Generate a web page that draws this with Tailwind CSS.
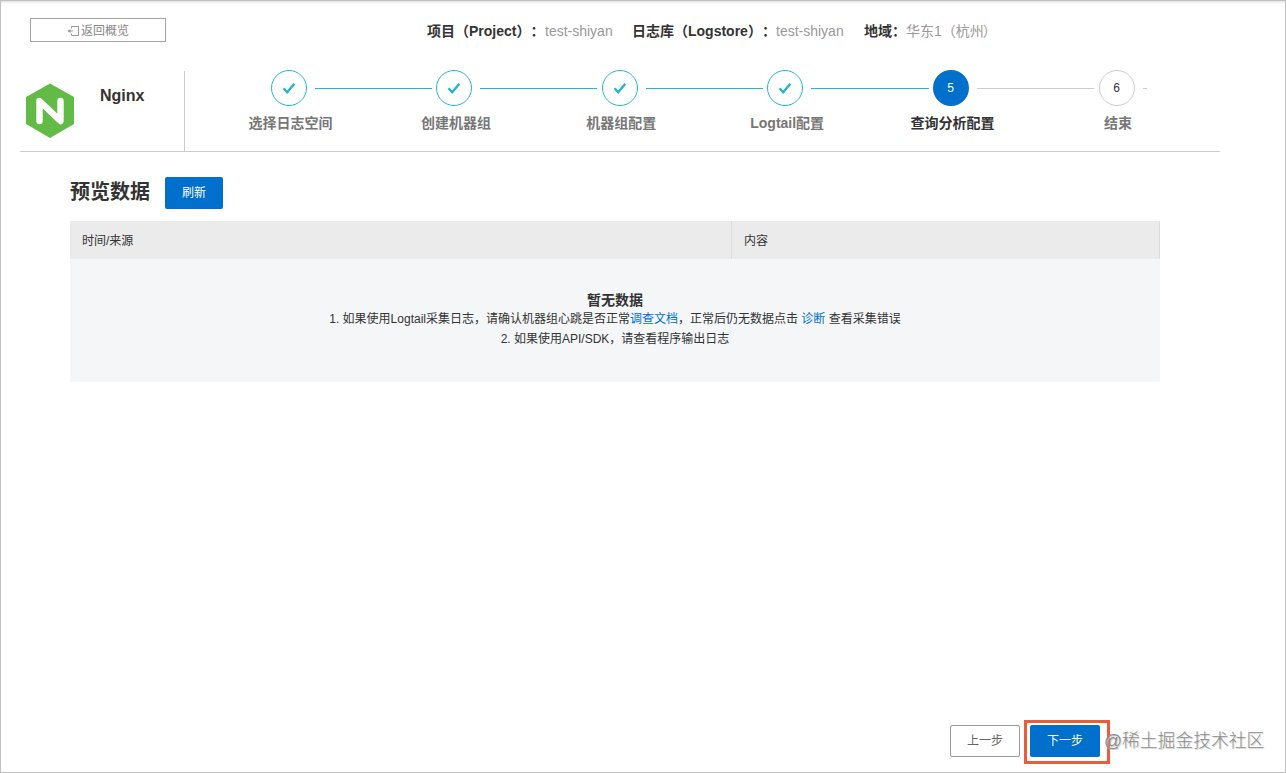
<!DOCTYPE html>
<html lang="zh-CN">
  <head>
    <meta charset="UTF-8" />
    <meta name="viewport" content="width=device-width, initial-scale=1.0" />
    <title>查询分析配置</title>
    <script src="https://cdn.jsdelivr.net/npm/@tailwindcss/browser@4"></script>
  </head>
  <body
    class="relative flex flex-col w-[1286px] h-[773px] overflow-hidden bg-white border border-[#c0c0c0] text-xs text-[#333] whitespace-nowrap font-['Liberation_Sans','Noto_Sans_CJK_SC',sans-serif] [text-spacing-trim:space-all]"
  >
    <div class="h-[3px] shrink-0 bg-linear-to-b from-[#e2e2e2] to-white"></div>

    <!-- top bar -->
    <header class="flex h-[67px] shrink-0 pt-[14px] pl-[29px]">
      <button
        class="flex items-center justify-center w-[136px] h-6 pt-px border border-[#a3a3a3] text-[#888]"
      >
        <svg class="w-[13px] h-3 mr-px" viewBox="0 0 13 12" fill="none" stroke="#999">
          <path d="M4.5 3.5v-2h7v9h-7v-2" />
          <path d="M6 6H1" />
          <path d="M3.5 4v4L.5 6z" fill="#999" stroke="none" />
        </svg>
        <span>返回概览</span>
      </button>
      <div class="flex h-[26px] items-center ml-[261px] text-sm text-[#999]">
        <b class="w-[118px] text-[#333]">项目（Project）：</b>
        <span class="w-[87px]">test-shiyan</span>
        <b class="w-[144px] text-[#333]">日志库（Logstore）：</b>
        <span class="w-[88px]">test-shiyan</span>
        <b class="w-[42px] text-[#333]">地域：</b>
        <span>华东1（杭州<span class="-ml-px">）</span></span>
      </div>
    </header>

    <!-- wizard steps -->
    <section class="flex w-[1200px] h-[81px] shrink-0 ml-[19px] border-b border-[#ccc]">
      <div class="flex w-[165px] pl-[6px] pt-[12px] border-r border-[#ccc]">
        <svg class="w-12 h-[55px]" viewBox="0 0 48 55">
          <path d="M24 0.5 48 14v27L24 55 0 41V14z" fill="#62bb46" />
          <path d="M13.5 38V18L34.5 38V18" fill="none" stroke="#fff" stroke-width="6.4" stroke-linecap="round" stroke-linejoin="round" />
        </svg>
        <h1 class="ml-[26px] mt-px text-base leading-6 font-bold">Nginx</h1>
      </div>
      <ol class="flex -mt-px pl-[86px] text-sm font-bold text-[#777]">
        <li class="w-[165.4px]">
          <div class="flex items-center gap-2">
            <i class="flex items-center justify-center size-9 shrink-0 rounded-full border border-[#25b4ce]">
              <svg class="size-3.5" viewBox="0 0 14 14" fill="none" stroke="#25b4ce" stroke-width="2.4"><path d="M1.5 7.3 5.2 11.3 12.3 2.7" /></svg>
            </i>
            <hr class="w-[117px] border-[#25b4ce]" />
          </div>
          <p class="flex justify-center w-[39px] pt-[7px] leading-5">选择日志空间</p>
        </li>
        <li class="w-[165.4px]">
          <div class="flex items-center gap-2">
            <i class="flex items-center justify-center size-9 shrink-0 rounded-full border border-[#25b4ce]">
              <svg class="size-3.5" viewBox="0 0 14 14" fill="none" stroke="#25b4ce" stroke-width="2.4"><path d="M1.5 7.3 5.2 11.3 12.3 2.7" /></svg>
            </i>
            <hr class="w-[117px] border-[#25b4ce]" />
          </div>
          <p class="flex justify-center w-[39px] pt-[7px] leading-5">创建机器组</p>
        </li>
        <li class="w-[165.4px]">
          <div class="flex items-center gap-2">
            <i class="flex items-center justify-center size-9 shrink-0 rounded-full border border-[#25b4ce]">
              <svg class="size-3.5" viewBox="0 0 14 14" fill="none" stroke="#25b4ce" stroke-width="2.4"><path d="M1.5 7.3 5.2 11.3 12.3 2.7" /></svg>
            </i>
            <hr class="w-[117px] border-[#25b4ce]" />
          </div>
          <p class="flex justify-center w-[39px] pt-[7px] leading-5">机器组配置</p>
        </li>
        <li class="w-[165.4px]">
          <div class="flex items-center gap-2">
            <i class="flex items-center justify-center size-9 shrink-0 rounded-full border border-[#25b4ce]">
              <svg class="size-3.5" viewBox="0 0 14 14" fill="none" stroke="#25b4ce" stroke-width="2.4"><path d="M1.5 7.3 5.2 11.3 12.3 2.7" /></svg>
            </i>
            <hr class="w-[118px] border-[#25b4ce]" />
          </div>
          <p class="flex justify-center w-10 pt-[7px] leading-5">Logtail配置</p>
        </li>
        <li class="w-[166px]">
          <div class="flex items-center gap-2">
            <span class="flex items-center justify-center size-9 shrink-0 rounded-full bg-[#0070cc] text-xs font-normal text-white">5</span>
            <hr class="w-[117px] border-[#ccc]" />
          </div>
          <p class="flex justify-center w-10 pt-[7px] leading-5 text-[#333]">查询分析配置</p>
        </li>
        <li>
          <div class="flex items-center gap-2">
            <span class="flex items-center justify-center size-9 shrink-0 rounded-full border border-[#ccc] text-xs font-normal text-[#333]">6</span>
            <hr class="w-1 border-[#ccc]" />
          </div>
          <p class="flex justify-center w-[39px] pt-[7px] leading-5">结束</p>
        </li>
      </ol>
    </section>

    <!-- data preview -->
    <main class="w-[1090px] ml-[69px] pt-[25px]">
      <div class="flex h-[44px]">
        <h2 class="w-[95px] pt-px text-xl leading-7 font-bold">预览数据</h2>
        <button class="w-[58px] h-8 rounded-xs bg-[#0070cc] text-white">刷新</button>
      </div>
      <div class="flex items-center h-[38px] bg-[#ebebeb] border-r border-[#dcdcdc]">
        <div class="flex items-center w-[662px] h-full pl-3 pt-0.5 border-r border-[#dcdcdc]">时间/来源</div>
        <div class="pl-3 pt-0.5">内容</div>
      </div>
      <div class="h-[123px] pt-[31px] bg-[#f5f6f8] text-center leading-5">
        <p class="h-[19px] text-sm leading-5 font-bold">暂无数据</p>
        <p>1. 如果使用Logtail采集日志，请确认机器组心跳是否正常<a class="text-[#0070cc]">调查文档</a>，正常后仍无数据点击 <a class="text-[#0070cc]">诊断</a> 查看采集错误</p>
        <p>2. 如果使用API/SDK，请查看程序输出日志</p>
      </div>
    </main>

    <footer class="flex items-start mt-auto mb-2 ml-[949px]">
      <button class="w-[70px] h-8 mt-[5px] rounded-xs border border-[#999] text-[#666]">上一步</button>
      <div class="flex w-[86px] h-[44px] ml-1 pl-[3px] pt-[2px] border-3 border-[#ee5a3c]">
        <button class="w-[70px] h-8 rounded-xs bg-[#0070cc] text-white">下一步</button>
      </div>
    </footer>

    <!-- watermark -->
    <div class="absolute left-[1103px] top-[726px] text-[17.8px] leading-7 font-light text-[#8c8c8c] [text-shadow:1px_1px_1px_#ccc]">@稀土掘金技术社区</div>
  </body>
</html>
